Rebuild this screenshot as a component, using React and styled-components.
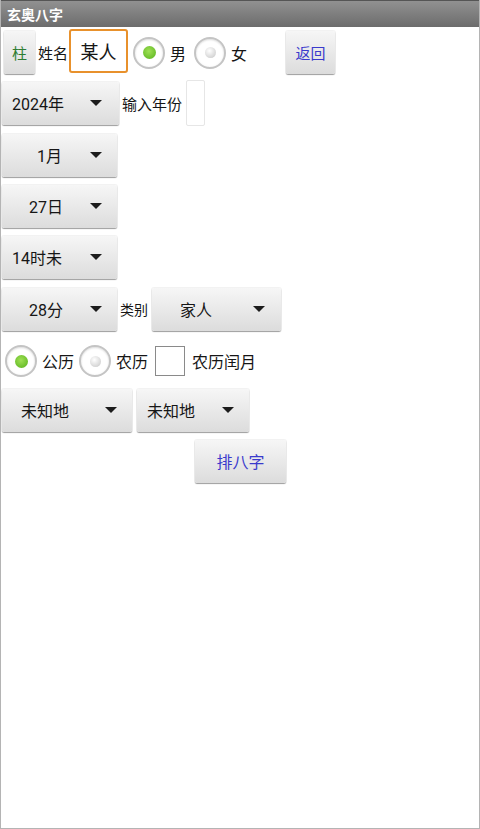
import React from 'react'
import styled, { createGlobalStyle } from 'styled-components'

const GlobalStyle = createGlobalStyle`
    html, body {
        margin: 0;
        padding: 0;
        background: #ffffff;
    }
    body {
        font-family: Roboto, "Noto Sans CJK SC", "Noto Sans", sans-serif;
        color: #161616;
    }
`

const Screen = styled.div`
    width: 480px;
    height: 829px;
    box-sizing: border-box;
    border: 1px solid #b4b4b4;
    border-top: none;
    background: #ffffff;
    overflow: hidden;
`

// title bar
const TitleBar = styled.div`
    height: 27px;
    box-sizing: border-box;
    border-top: 1px solid #555555;
    background: linear-gradient(#919191, #6c6c6c);
    display: flex;
    align-items: center;
    padding-left: 6px;
    color: #ffffff;
    font-size: 14px;
    font-weight: bold;
`

const Content = styled.div`
    display: flex;
    flex-direction: column;
    padding-left: 1px;
`

const Row = styled.div`
    display: flex;
    align-items: center;
    height: ${props => props.h}px;
    margin-top: ${props => props.mt}px;
    padding-left: ${props => props.pl || 0}px;
`

const Button = styled.div`
    box-sizing: border-box;
    height: 43px;
    width: ${props => props.w}px;
    margin-left: ${props => props.ml || 0}px;
    display: flex;
    align-items: center;
    justify-content: center;
    background: linear-gradient(#f6f6f6, #dcdcdc);
    border-radius: 2px;
    box-shadow: 0 1px 1px rgba(0, 0, 0, 0.35), 0 0 0 1px rgba(0, 0, 0, 0.05);
    font-size: ${props => props.fs || 15}px;
    color: ${props => props.color || '#161616'};
`

const Label = styled.span`
    font-size: ${props => props.fs || 15}px;
    margin-left: ${props => props.ml || 0}px;
    white-space: nowrap;
`

const NameInput = styled.div`
    box-sizing: border-box;
    width: 59px;
    height: 44px;
    margin-left: 1px;
    margin-top: -3px;
    border: 2px solid #e8912c;
    border-radius: 3px;
    display: flex;
    align-items: center;
    justify-content: center;
    font-size: 18px;
    background: #ffffff;
`

const YearInput = styled.div`
    box-sizing: border-box;
    width: 19px;
    height: 46px;
    margin-left: 4px;
    border: 1px solid #e6e6e6;
    border-radius: 2px;
`

const RadioCircle = styled.div`
    box-sizing: border-box;
    width: 32px;
    height: 32px;
    margin-left: ${props => props.ml || 0}px;
    border-radius: 50%;
    border: 2px solid #c4c4c4;
    background: radial-gradient(circle, #ffffff 60%, #f0f0f0 100%);
    box-shadow: inset 0 1px 2px rgba(0, 0, 0, 0.12);
    display: flex;
    align-items: center;
    justify-content: center;
`

const RadioDot = styled.div`
    width: ${props => props.on ? 13 : 11}px;
    height: ${props => props.on ? 13 : 11}px;
    border-radius: 50%;
    background: ${props => props.on
        ? 'radial-gradient(circle at 45% 40%, #9fe055, #6cbf2c 70%, #5aa323)'
        : 'radial-gradient(circle at 40% 35%, #ffffff, #d6d6d6 70%, #b5b5b5)'};
`

const CheckBox = styled.div`
    box-sizing: border-box;
    width: 30px;
    height: 30px;
    margin-left: 7px;
    border: 1px solid #8a8a8a;
    background: #ffffff;
`

const SpinnerBox = styled(Button)`
    justify-content: flex-start;
    font-size: 16px;
`

const SpinnerText = styled.span`
    padding-left: ${props => props.pad}px;
    white-space: nowrap;
`

const Arrow = styled.span`
    margin-left: auto;
    margin-right: ${props => props.mr || 15}px;
    width: 0;
    height: 0;
    border-left: 6px solid transparent;
    border-right: 6px solid transparent;
    border-top: 6px solid #1c1c1c;
`

const Spinner = ({ w, pad, ml, mr, children }) => (
    <SpinnerBox w={w} ml={ml}>
        <SpinnerText pad={pad}>{children}</SpinnerText>
        <Arrow mr={mr} />
    </SpinnerBox>
)

const Radio = ({ on, ml, label }) => (
    <>
        <RadioCircle ml={ml}>
            <RadioDot on={on ? 1 : 0} />
        </RadioCircle>
        <Label fs={16} ml={5}>{label}</Label>
    </>
)

const App = () => {
    return (
        <Screen>
            <GlobalStyle />
            <TitleBar>玄奥八字</TitleBar>
            <Content>
                <Row h={47} mt={2} pl={2}>
                    <Button w={31} color='#2e7d32' fs={15}>柱</Button>
                    <Label ml={3}>姓名</Label>
                    <NameInput>某人</NameInput>
                    <Radio on ml={5} label='男' />
                    <Radio ml={8} label='女' />
                    <Button w={49} ml={39} color='#3a3acc'>返回</Button>
                </Row>

                <Row h={44} mt={5}>
                    <Spinner w={117} pad={10} mr={17}>2024年</Spinner>
                    <Label fs={15} ml={3}>输入年份</Label>
                    <YearInput />
                </Row>

                <Row h={44} mt={8}>
                    <Spinner w={115} pad={35}>1月</Spinner>
                </Row>
                <Row h={44} mt={7}>
                    <Spinner w={115} pad={27}>27日</Spinner>
                </Row>
                <Row h={44} mt={7}>
                    <Spinner w={115} pad={10}>14时未</Spinner>
                </Row>
                <Row h={44} mt={8}>
                    <Spinner w={115} pad={27}>28分</Spinner>
                    <Label fs={14} ml={3}>类别</Label>
                    <Spinner w={129} ml={4} pad={28} mr={16}>家人</Spinner>
                </Row>

                <Row h={36} mt={12} pl={3}>
                    <Radio on label='公历' />
                    <Radio ml={5} label='农历' />
                    <CheckBox />
                    <Label fs={16} ml={7}>农历闰月</Label>
                </Row>

                <Row h={44} mt={9}>
                    <Spinner w={130} pad={19}>未知地</Spinner>
                    <Spinner w={112} ml={5} pad={10}>未知地</Spinner>
                </Row>

                <Row h={46} mt={6}>
                    <Button w={91} ml={193} fs={16} color='#3a3acc'>排八字</Button>
                </Row>
            </Content>
        </Screen>
    )
}

export default App
